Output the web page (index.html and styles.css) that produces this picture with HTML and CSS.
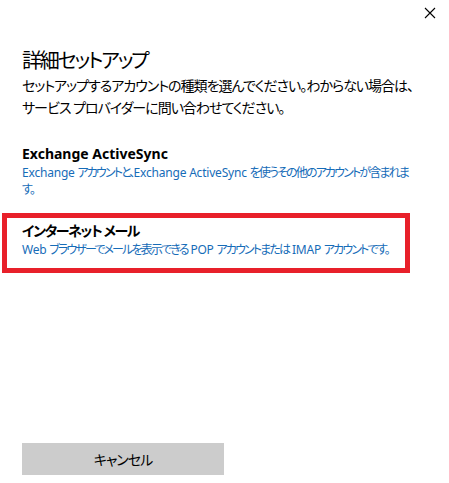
FILE: index.html
```html
<!DOCTYPE html>
<html lang="ja">

<head>
    <meta charset="UTF-8">
    <meta name="viewport" content="width=device-width, initial-scale=1.0">
    <title>詳細セットアップ</title>
    <link rel="stylesheet" href="styles.css">
</head>

<body>
    <div class="dialog">
        <div class="dialog-top">
            <button class="close-btn" aria-label="閉じる">
                <svg width="12" height="12" viewBox="0 0 12 12">
                    <path d="M1 1 L11 11 M11 1 L1 11" stroke="#000" stroke-width="1.1" fill="none" />
                </svg>
            </button>
        </div>

        <div class="dialog-header">
            <div class="dialog-title">詳細セットアップ</div>
            <div class="dialog-subtitle">セットアップするアカウントの種類を選んでください。わからない場合は、<br>サービス プロバイダーに問い合わせてください。</div>
        </div>

        <div class="account-list">
            <div class="account-option">
                <div class="account-name">Exchange ActiveSync</div>
                <div class="account-desc"><span class="latin">Exchange</span> アカウントと、<span class="latin">Exchange ActiveSync</span> を使うその他のアカウントが含まれま<br>す。</div>
            </div>
            <div class="account-option selected">
                <div class="account-name ja">インターネット メール</div>
                <div class="account-desc"><span class="latin">Web</span> ブラウザーでメールを表示できる <span class="latin">POP</span> アカウントまたは <span class="latin">IMAP</span> アカウントです。</div>
            </div>
        </div>

        <div class="dialog-footer">
            <button class="cancel-btn">キャンセル</button>
        </div>
    </div>
</body>

</html>
```

FILE: styles.css
```css
body {
    margin: 0;
    background: #fff;
    font-family: "Noto Sans", "Noto Sans CJK JP", sans-serif;
    font-feature-settings: "palt";
    color: #000;
}

.dialog {
    width: 449px;
    height: 483px;
    display: flex;
    flex-direction: column;
    box-sizing: border-box;
}

.dialog-top {
    display: flex;
    justify-content: flex-end;
    padding: 7px 13px 0 0;
    height: 20px;
}

.close-btn {
    background: none;
    border: none;
    padding: 0;
    width: 12px;
    height: 12px;
    cursor: pointer;
    display: flex;
}

.dialog-header {
    padding: 21px 10px 0 22px;
}

.dialog-title {
    font-size: 20px;
    line-height: 26px;
    letter-spacing: -2.2px;
    margin-bottom: 1px;
}

.dialog-subtitle {
    font-size: 14px;
    line-height: 22px;
    letter-spacing: -1px;
    white-space: nowrap;
}

.account-list {
    margin-top: 25px;
    padding-right: 39px;
}

.account-option {
    padding: 0 0 0 22px;
    margin-bottom: 15px;
}

.account-name {
    font-size: 14px;
    font-weight: bold;
    line-height: 20px;
}

.account-name.ja {
    letter-spacing: -1.4px;
}

.account-desc {
    font-size: 12px;
    line-height: 17px;
    letter-spacing: -1.85px;
    word-spacing: 1.5px;
    color: #166cb8;
    white-space: nowrap;
}

/* 英字は詰めすぎない */
.account-desc .latin {
    letter-spacing: -0.2px;
    word-spacing: 0;
}

/* 選択中の枠 */
.account-option.selected {
    margin-left: 2px;
    border: 5px solid #e8202a;
    padding: 3px 0 10px 15px;
}

.dialog-footer {
    margin-top: auto;
    padding: 0 0 8px 22px;
}

.cancel-btn {
    width: 202px;
    height: 32px;
    background: #cccccc;
    border: none;
    font-family: inherit;
    font-feature-settings: "palt";
    font-size: 14px;
    letter-spacing: -1px;
    color: #000;
    cursor: pointer;
}
```
